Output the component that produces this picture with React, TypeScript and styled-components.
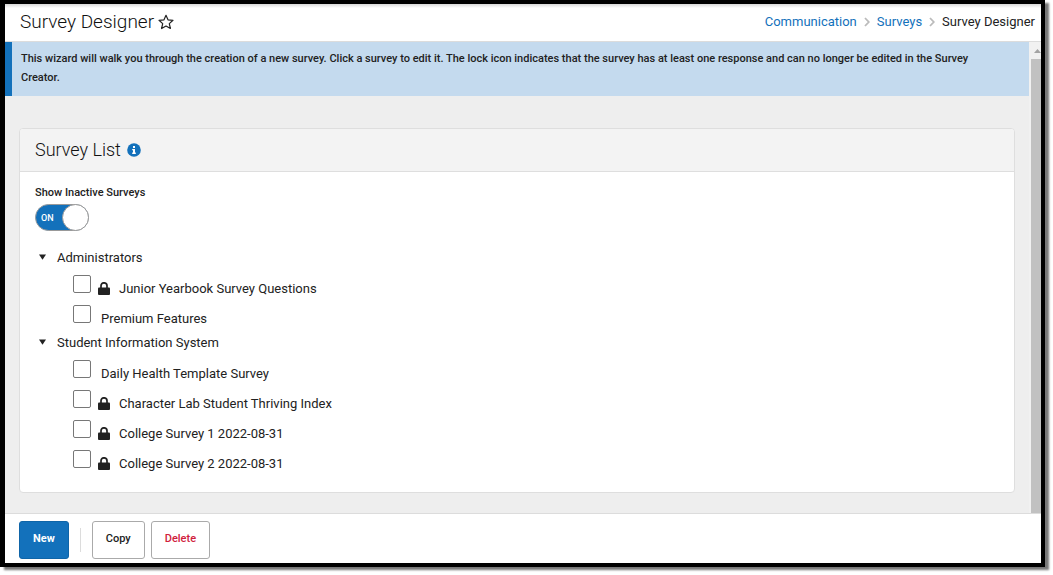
import React, { useState } from 'react';
import styled, { createGlobalStyle } from 'styled-components';

const Global = createGlobalStyle`
  *, *::before, *::after { box-sizing: border-box; }
  body { margin: 0; background: #fff; color: #222; font: 400 13px/20px Roboto, Arial, sans-serif; }
  h1, h2, p, ul, ol { margin: 0; padding: 0; }
  ul, ol { list-style: none; }
`;

const Page = styled.div`
  height: 100vh;
  padding: 0 8px 8px 0;
`;

const Frame = styled.div`
  display: flex;
  flex-direction: column;
  height: 100%;
  border: 4px solid #000;
  border-left-width: 5px;
  background: #fff;
  box-shadow: 4px 3px 2px #777;
`;

const Header = styled.header`
  display: flex;
  align-items: center;
  justify-content: space-between;
  height: 38px;
  padding: 0 6px 2px 15px;
  border-bottom: 1px solid #dcdcdc;
  background: linear-gradient(#d8d8d8, #fff 4px);
`;

const TitleGroup = styled.div`
  display: flex;
  align-items: center;
  gap: 4px;
`;

const Title = styled.h1`
  color: #111;
  font-size: 19px;
  font-weight: 300;
  line-height: 24px;
`;

const IconButton = styled.button`
  display: flex;
  padding: 0;
  border: 0;
  background: none;
  color: #222;
`;

const Crumbs = styled.ol`
  display: flex;
  align-items: center;
  gap: 7px;
`;

const Crumb = styled.li`
  display: flex;
  align-items: center;
  gap: 7px;
`;

const CrumbLink = styled.a`
  color: #1371bb;
  text-decoration: none;
`;

const Scroller = styled.div`
  display: flex;
  flex: 1;
  min-height: 0;
  background: #eee;
`;

const Content = styled.main`
  flex: 1;
  min-width: 0;
`;

const Track = styled.div`
  display: flex;
  flex-direction: column;
  align-items: flex-end;
  width: 12px;
  background: #f1f1f1;
`;

const TrackArrow = styled.svg`
  width: 10px;
  height: 17px;
`;

const Thumb = styled.div`
  flex: 1;
  width: 10px;
  background: #c1c1c1;
`;

const Banner = styled.p`
  padding: 7px 24px 9px 9px;
  border-left: 7px solid #1371bb;
  background: #c4daee;
  font-size: 11px;
  font-weight: 500;
  line-height: 19px;
`;

const Card = styled.section`
  margin: 32px 14px 0;
  border: 1px solid #dedede;
  border-radius: 4px;
  background: #fff;
`;

const CardHeader = styled.header`
  display: flex;
  align-items: center;
  gap: 6px;
  height: 43px;
  padding: 0 15px;
  border-bottom: 1px solid #dedede;
  border-radius: 3px 3px 0 0;
  background: #f3f3f3;
`;

const CardTitle = styled.h2`
  color: #111;
  font-size: 18px;
  font-weight: 300;
  line-height: 24px;
`;

const CardBody = styled.div`
  padding: 13px 15px 14px;
`;

const Setting = styled.label`
  display: flex;
  flex-direction: column;
  align-items: flex-start;
  gap: 3px;
  margin-bottom: 17px;
  font-size: 11px;
  font-weight: 500;
  line-height: 16px;
`;

const Switch = styled.span`
  display: grid;
  width: 54px;
  height: 27px;
`;

const SwitchInput = styled.input`
  grid-area: 1 / 1;
  appearance: none;
  width: 100%;
  height: 100%;
  margin: 0;
  border: 1px solid #999;
  border-radius: 14px;
  background: #aaa;
  &:checked { background: #1371bb; }
`;

const SwitchFace = styled.span<{ $on: boolean }>`
  grid-area: 1 / 1;
  display: flex;
  flex-direction: ${(p) => (p.$on ? 'row' : 'row-reverse')};
  align-items: center;
  justify-content: space-between;
  padding-${(p) => (p.$on ? 'left' : 'right')}: 6px;
  color: #fff;
  font-size: 9px;
  pointer-events: none;
`;

const Knob = styled.span`
  width: 27px;
  height: 27px;
  border: 1px solid #999;
  border-radius: 50%;
  background: #fff;
`;

const GroupToggle = styled.button`
  display: flex;
  align-items: center;
  gap: 11px;
  height: 20px;
  padding: 0 0 0 4px;
  border: 0;
  background: none;
  color: inherit;
  font: inherit;
`;

const Items = styled.ul`
  padding: 5px 0 0 38px;
`;

const Item = styled.li`
  display: flex;
  align-items: flex-start;
  height: 30px;
`;

const Check = styled.input`
  appearance: none;
  flex: none;
  width: 18px;
  height: 18px;
  margin: 2px 0 0;
  border: 1px solid #777;
  border-radius: 2px;
  background: #fff;
  &:checked { background: #1371bb; }
`;

const ItemLabel = styled.label`
  display: flex;
  align-items: center;
  gap: 9px;
  height: 20px;
  margin-top: 6px;
  padding-left: 7px;
`;

const ItemName = styled.span<{ $locked: boolean }>`
  padding-left: ${(p) => (p.$locked ? 0 : 3)}px;
`;

const Footer = styled.footer`
  display: flex;
  align-items: center;
  height: 50px;
  padding: 2px 14px 0;
  border-top: 1px solid #dcdcdc;
`;

const Button = styled.button<{ $kind?: 'primary' | 'danger' }>`
  height: 38px;
  padding: 0 13px 1px;
  border: 1px solid ${(p) => (p.$kind === 'primary' ? '#0f65a8' : '#aaa')};
  border-radius: 3px;
  background: ${(p) => (p.$kind === 'primary' ? '#1371bb' : '#fff')};
  color: ${(p) => (p.$kind === 'primary' ? '#fff' : p.$kind === 'danger' ? '#d0213c' : '#222')};
  font: ${(p) => (p.$kind === 'primary' ? 700 : 500)} 11px/16px Roboto, Arial, sans-serif;
  & + & { margin-left: 6px; }
`;

const Divider = styled.span`
  width: 1px;
  height: 24px;
  margin: 0 11px;
  background: #dcdcdc;
`;

const StarIcon = () => (
  <svg width="16" height="16" viewBox="0 0 16 16" fill="none" stroke="currentColor" strokeWidth="1.2" strokeLinejoin="round" aria-hidden="true">
    <path d="M8 1.3 10 5.8 15 6.3 11.3 9.6 12.4 14.5 8 12 3.6 14.5 4.7 9.6 1 6.3 6 5.8Z" />
  </svg>
);

const ChevronIcon = () => (
  <svg width="6" height="10" viewBox="0 0 6 10" fill="none" stroke="#bbb" strokeWidth="1.8" aria-hidden="true">
    <path d="M1 1 4.8 5 1 9" />
  </svg>
);

const InfoIcon = () => (
  <svg width="14" height="14" viewBox="0 0 14 14" aria-hidden="true">
    <circle cx="7" cy="7" r="6.8" fill="#1371bb" />
    <path d="M6 3h2v2H6zM5.2 6H8v3.6h.8V11H5.2V9.6H6V7.3h-.8z" fill="#fff" />
  </svg>
);

const LockIcon = () => (
  <svg width="12" height="15" viewBox="0 0 12 15" aria-hidden="true">
    <path d="M3 6V3.8a3 3 0 0 1 6 0V6" fill="none" stroke="#222" strokeWidth="1.7" />
    <rect x="0" y="5.5" width="12" height="7.5" rx="1" fill="#222" />
  </svg>
);

const CaretIcon = () => (
  <svg width="7" height="8" viewBox="0 0 7 8" aria-hidden="true">
    <path d="M0 .5H7L3.5 5.8Z" fill="#222" />
  </svg>
);

const groups = [
  {
    name: 'Administrators',
    surveys: [
      { name: 'Junior Yearbook Survey Questions', locked: true },
      { name: 'Premium Features', locked: false },
    ],
  },
  {
    name: 'Student Information System',
    surveys: [
      { name: 'Daily Health Template Survey', locked: false },
      { name: 'Character Lab Student Thriving Index', locked: true },
      { name: 'College Survey 1 2022-08-31', locked: true },
      { name: 'College Survey 2 2022-08-31', locked: true },
    ],
  },
];

const slug = (name: string) => name.toLowerCase().replace(/\W+/g, '-');

function SurveyGroup({ group }: { group: (typeof groups)[number] }) {
  const [open, setOpen] = useState(true);
  return (
    <li>
      <GroupToggle type="button" aria-expanded={open} onClick={() => setOpen(!open)}>
        <CaretIcon />
        {group.name}
      </GroupToggle>
      {open && (
        <Items>
          {group.surveys.map((s) => (
            <Item key={s.name}>
              <Check type="checkbox" id={slug(s.name)} />
              <ItemLabel htmlFor={slug(s.name)}>
                {s.locked && <LockIcon />}
                <ItemName $locked={s.locked}>{s.name}</ItemName>
              </ItemLabel>
            </Item>
          ))}
        </Items>
      )}
    </li>
  );
}

export default function App() {
  const [showInactive, setShowInactive] = useState(true);
  return (
    <Page>
      <Global />
      <Frame>
        <Header>
          <TitleGroup>
            <Title>Survey Designer</Title>
            <IconButton type="button" aria-label="Add to favorites">
              <StarIcon />
            </IconButton>
          </TitleGroup>
          <nav aria-label="Breadcrumb">
            <Crumbs>
              <Crumb><CrumbLink href="#communication">Communication</CrumbLink><ChevronIcon /></Crumb>
              <Crumb><CrumbLink href="#surveys">Surveys</CrumbLink><ChevronIcon /></Crumb>
              <Crumb aria-current="page">Survey Designer</Crumb>
            </Crumbs>
          </nav>
        </Header>
        <Scroller>
          <Content>
            <Banner>
              This wizard will walk you through the creation of a new survey. Click a survey to edit it. The lock icon
              indicates that the survey has at least one response and can no longer be edited in the Survey Creator.
            </Banner>
            <Card>
              <CardHeader>
                <CardTitle>Survey List</CardTitle>
                <IconButton type="button" aria-label="About the survey list">
                  <InfoIcon />
                </IconButton>
              </CardHeader>
              <CardBody>
                <Setting>
                  Show Inactive Surveys
                  <Switch>
                    <SwitchInput
                      type="checkbox"
                      role="switch"
                      checked={showInactive}
                      onChange={(e) => setShowInactive(e.target.checked)}
                    />
                    <SwitchFace $on={showInactive} aria-hidden="true">
                      {showInactive ? 'ON' : 'OFF'}
                      <Knob />
                    </SwitchFace>
                  </Switch>
                </Setting>
                <ul>
                  {groups.map((g) => (
                    <SurveyGroup key={g.name} group={g} />
                  ))}
                </ul>
              </CardBody>
            </Card>
          </Content>
          <Track aria-hidden="true">
            <TrackArrow viewBox="0 0 10 17">
              <path d="M3 11 6.5 7 10 11Z" fill="#a3a3a3" />
            </TrackArrow>
            <Thumb />
          </Track>
        </Scroller>
        <Footer>
          <Button type="button" $kind="primary">New</Button>
          <Divider />
          <Button type="button">Copy</Button>
          <Button type="button" $kind="danger">Delete</Button>
        </Footer>
      </Frame>
    </Page>
  );
}
